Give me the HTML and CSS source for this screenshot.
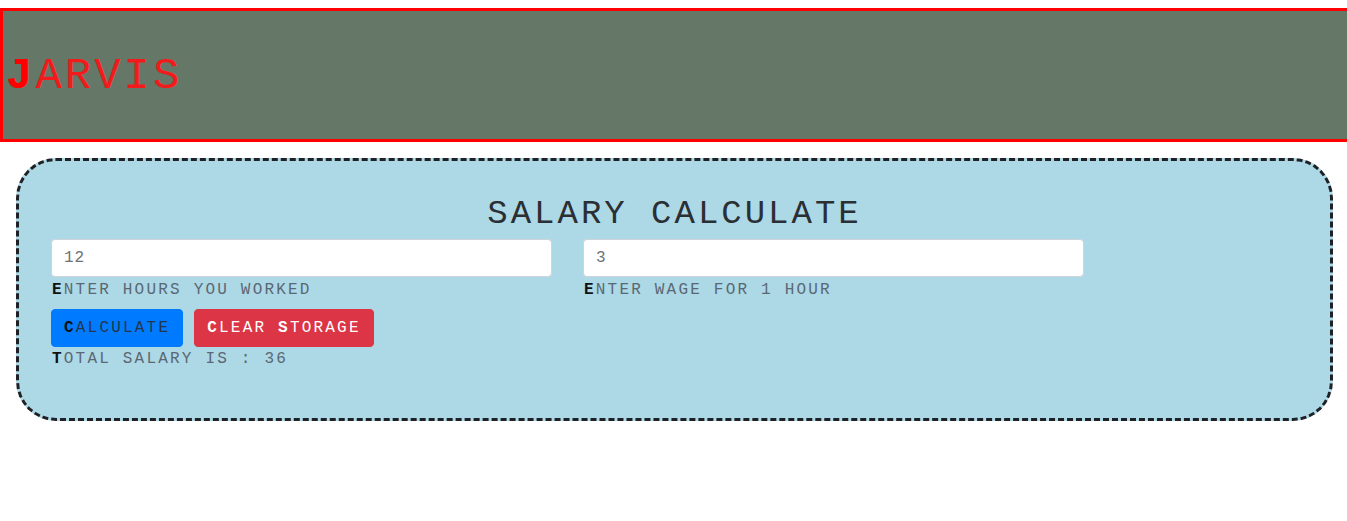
FILE: index.html
```html
<!DOCTYPE html>
<html>
<head>
<meta charset="utf-8">
<title>Jarvis</title>
<link rel="stylesheet" href="styles.css">
</head>
<body>
<header class="topbar">
  <h1 class="brand">JARVIS</h1>
</header>
<main class="card">
  <h2 class="title">SALARY CALCULATE</h2>
  <div class="fields">
    <div class="field">
      <input class="input" type="text" value="12">
      <label class="hint">ENTER HOURS YOU WORKED</label>
    </div>
    <div class="field">
      <input class="input" type="text" value="3">
      <label class="hint">ENTER WAGE FOR 1 HOUR</label>
    </div>
  </div>
  <div class="actions">
    <button class="btn btn-primary">CALCULATE</button>
    <button class="btn btn-danger"><b>C</b>LEAR <b>S</b>TORAGE</button>
  </div>
  <p class="result">TOTAL SALARY IS : 36</p>
</main>
</body>
</html>
```
FILE: styles.css
```css
* { box-sizing: border-box; }
html, body { overflow-x: hidden; }
body {
  margin: 0;
  font-family: "Liberation Mono", "DejaVu Sans Mono", monospace;
  letter-spacing: 2.2px;
  background: #fff;
}
.topbar {
  margin-top: 8px;
  height: 134px;
  background: #657766;
  border: 3px solid #ff0000;
  border-right: 0;
  display: flex;
  align-items: center;
  padding-left: 3px;
}
.brand {
  margin: 0;
  padding-top: 2px;
  font-size: 44px;
  font-weight: normal;
  letter-spacing: 3px;
  color: #f21a1a;
}
.brand::first-letter { font-weight: bold; color: #ff0000; }
.card {
  margin: 16px 14px 0 16px;
  height: 263px;
  background: #add8e6;
  border: 3px dashed #1e2126;
  border-radius: 40px;
  padding: 33px 32px 0 32px;
}
.title {
  margin: 0 0 4px;
  text-align: center;
  font-size: 34px;
  line-height: 41px;
  font-weight: normal;
  letter-spacing: 3px;
  color: #2a2f33;
}
.fields {
  display: grid;
  grid-template-columns: 501px 501px;
  column-gap: 31px;
}
.field { display: flex; flex-direction: column; }
.input {
  height: 38px;
  border: 1px solid #ced4da;
  border-radius: 4px;
  background: #fff;
  padding: 0 12px;
  font-family: inherit;
  font-size: 16px;
  letter-spacing: 1px;
  color: #6b7278;
  outline: none;
}
.hint {
  display: block;
  font-size: 16px;
  line-height: 24px;
  padding-top: 1px;
  color: #5a6873;
  margin-left: 1px;
}
.hint::first-letter { font-weight: bold; color: #111; }
.actions {
  display: flex;
  gap: 11px;
  margin-top: 7px;
}
.btn {
  height: 38px;
  padding: 0 12px;
  border: 1px solid transparent;
  border-radius: 4px;
  font-family: inherit;
  font-size: 16px;
  letter-spacing: 2.2px;
  cursor: pointer;
}
.btn-primary { background: #007bff; border-color: #007bff; color: #24364a; }
.btn-primary::first-letter { font-weight: bold; color: #111; }
.btn-danger { background: #dc3545; border-color: #dc3545; color: #fff; }
.btn-danger b { font-weight: bold; }
.result {
  margin: 0;
  font-size: 16px;
  line-height: 24px;
  color: #5a6873;
  margin-left: 1px;
}
.result::first-letter { font-weight: bold; color: #111; }
```
